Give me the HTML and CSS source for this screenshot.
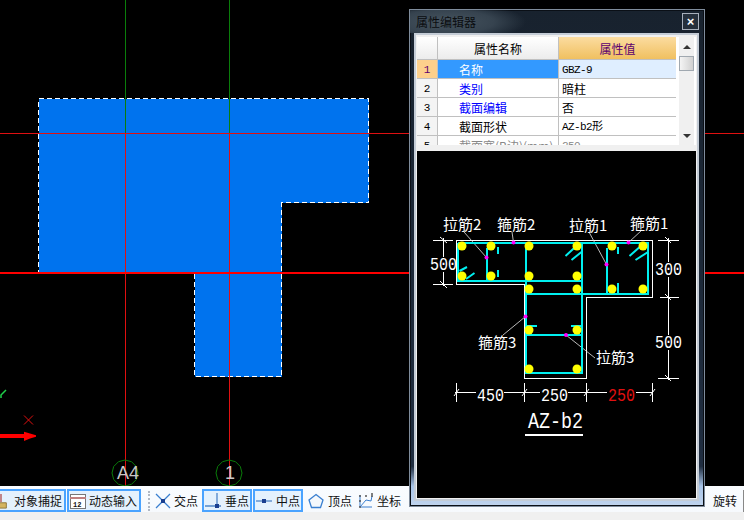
FILE: index.html
```html
<!DOCTYPE html>
<html lang="zh">
<head>
<meta charset="utf-8">
<title>属性编辑器</title>
<link rel="stylesheet" href="styles.css">
</head>
<body>
<div class="app">
  <svg class="cad" viewBox="0 0 744 486" shape-rendering="crispEdges">
    <polygon class="wall" points="38.5,98.5 368.5,98.5 368.5,202.5 281.5,202.5 281.5,376.5 194.5,376.5 194.5,272.5 38.5,272.5"/>
    <line class="axis-g" x1="125.5" y1="0" x2="125.5" y2="133"/>
    <line class="axis-g" x1="229.5" y1="0" x2="229.5" y2="133"/>
    <line class="axis-r" x1="125.5" y1="133" x2="125.5" y2="486"/>
    <line class="axis-r" x1="229.5" y1="133" x2="229.5" y2="486"/>
    <line class="axis-r" x1="0" y1="133.5" x2="744" y2="133.5"/>
    <line class="axis-main" x1="0" y1="272.5" x2="744" y2="272.5"/>
    <g shape-rendering="auto">
      <polygon class="bubble" points="125,460 131.5,461.7 136.3,466.5 138,473 136.3,479.5 131.5,484.3 125,486 118.5,484.3 113.7,479.5 112,473 113.7,466.5 118.5,461.7"/>
      <polygon class="bubble" points="229,460 235.5,461.7 240.3,466.5 242,473 240.3,479.5 235.5,484.3 229,486 222.5,484.3 217.7,479.5 216,473 217.7,466.5 222.5,461.7"/>
      <text class="bubble-t" x="117" y="479">A4</text>
      <text class="bubble-t" x="225" y="479">1</text>
      <path class="ucs-g" d="M6 390 L1 395 V398"/>
      <path class="ucs-x" d="M24 415.5 L33 424.5 M33 415.5 L24 424.5"/>
      <path class="ucs-a" d="M0 434 H24 V431.7 L30 433.5 L36 435.3 V436.7 L30 438.5 L24 441 V438 H0 Z"/>
    </g>
  </svg>

  <div class="toolbar">
    <div class="tool on first">
      <svg class="ico" viewBox="0 0 14 18"><path d="M4 11 H13 V17 H2 L0 14 Z" fill="#d4b460" stroke="#8a7030"/><path d="M7 1 V10" stroke="#b05050" stroke-width="1.5"/></svg>
      <span>对象捕捉</span>
    </div>
    <div class="tool on">
      <svg class="ico" viewBox="0 0 16 16"><rect x="0.5" y="1.5" width="15" height="14" fill="#fff" stroke="#777"/><rect x="0" y="4" width="16" height="2" fill="#c08080"/><text x="3" y="14" class="ico-t">12</text></svg>
      <span>动态输入</span>
    </div>
    <div class="grip"></div>
    <div class="tool">
      <svg class="ico" viewBox="0 0 16 16"><path d="M1 1 L15 15 M15 1 L1 15" stroke="#3a7fd0" stroke-width="1.3"/><rect x="6" y="6" width="4" height="4" fill="#1a3f90"/></svg>
      <span>交点</span>
    </div>
    <div class="tool on">
      <svg class="ico" viewBox="0 0 16 16"><path d="M0 13 H16 M12 0 V14" stroke="#4f86c8" stroke-width="1.3"/><rect x="10" y="11" width="4" height="4" fill="#1a3f90"/></svg>
      <span>垂点</span>
    </div>
    <div class="tool on">
      <svg class="ico" viewBox="0 0 16 16"><path d="M0 8 H16" stroke="#4f86c8" stroke-width="1.3"/><rect x="6" y="6" width="4" height="4" fill="#1a3f90"/></svg>
      <span>中点</span>
    </div>
    <div class="tool">
      <svg class="ico" viewBox="0 0 16 16"><path d="M8 1.5 L15 7 L12.5 14.5 H3.5 L1 7 Z" fill="#f4f8fc" stroke="#3a7fd0" stroke-width="1.3"/></svg>
      <span>顶点</span>
    </div>
    <div class="tool">
      <svg class="ico wide" viewBox="0 0 18 16"><path d="M3 2 V14 H15" stroke="#3a7fd0" fill="none"/><path d="M3 14 L9 7 L14 8 L15 3" stroke="#3a7fd0" fill="none"/><circle cx="3" cy="3" r="1" fill="#555"/><circle cx="3" cy="8" r="1" fill="#555"/><circle cx="3" cy="14" r="1" fill="#555"/><circle cx="15" cy="3" r="1" fill="#555"/><circle cx="15" cy="1" r="1" fill="#555"/><circle cx="9" cy="3" r="1" fill="#555"/></svg>
      <span>坐标</span>
    </div>
    <div class="tool rotate">
      <span>旋转</span>
      <div class="field"></div>
    </div>
  </div>

  <section class="panel">
    <header class="titlebar">
      <span class="title">属性编辑器</span>
      <button class="close" type="button">×</button>
    </header>
    <div class="panel-body">
      <div class="gridwrap">
        <div class="grid">
          <div class="c hd"></div><div class="c hd">属性名称</div><div class="c hd val">属性值</div>
          <div class="c no sel">1</div><div class="c name cur">名称</div><div class="c v curv mono">GBZ-9</div>
          <div class="c no">2</div><div class="c name link">类别</div><div class="c v">暗柱</div>
          <div class="c no">3</div><div class="c name link">截面编辑</div><div class="c v">否</div>
          <div class="c no">4</div><div class="c name">截面形状</div><div class="c v mono">AZ-b2形</div>
          <div class="c no">5</div><div class="c name dim">截面宽(B边)(mm)</div><div class="c v mono dim">250</div>
        </div>
        <div class="scroll">
          <div class="arrow up"></div>
          <div class="thumb"></div>
          <div class="arrow down"></div>
        </div>
      </div>
      <svg class="section" viewBox="417 151 279 347">
        <g shape-rendering="crispEdges">
          <path class="outline" d="M456.5 240.5 H652.5 V297.5 H586.5 V378.5 H524.5 V284.5 H456.5 Z"/>
          <path class="dim-l" d="M433 240.5 H453 M433 284.5 H453 M443.5 238 V257 M443.5 272 V286 M658 240.5 H679 M660 297.5 H679 M658 378.5 H679 M668.5 238 V262 M668.5 277 V335 M668.5 350 V380 M455 392.5 H476 M504 392.5 H540 M568 392.5 H607 M636 392.5 H653 M456.5 383 V402 M524.5 383 V402 M586.5 383 V402 M652.5 383 V402"/>
        </g>
        <path class="dim-l" d="M440 237 L447 243 M440 281 L447 288 M665 237 L671 243 M665 294 L671 300 M665 375 L671 381 M454 396 L459 389 M522 396 L527 389 M584 396 L589 389 M650 396 L655 389"/>
        <path class="leader" d="M486.5 257.5 L464 232 M513.5 242.5 L512 232 M606.5 264.5 L589 232 M628.5 242.5 L642 230 M525.5 316.5 L503 335 M566 335 L595 358"/>
        <g class="bars">
          <path d="M458 243 H648 V294 H526 M458 243 V281 H582 M526 243 V373 H582 V243 M526 335 H582 M487 248 V280 M607 248 V293"/>
          <path d="M498 247 V254 M498 270 V277 M618 247 V254 M618 283 V293 M526 326 H537 M571 326 H582"/>
          <path d="M565.5 256 L577.5 245 M571.5 260 L581.5 252 M629.5 256 L642 245 M635.5 260 L648 252 M459.5 271 L467 267 M466 279 L474.5 273"/>
        </g>
        <g class="dot">
          <circle cx="462" cy="246" r="4.5"/><circle cx="491" cy="246" r="4.5"/><circle cx="529" cy="246" r="4.5"/><circle cx="577" cy="246" r="4.5"/><circle cx="612" cy="246" r="4.5"/><circle cx="643" cy="246" r="4.5"/>
          <circle cx="462" cy="276" r="4.5"/><circle cx="491" cy="276" r="4.5"/><circle cx="529" cy="276" r="4.5"/><circle cx="577" cy="276" r="4.5"/>
          <circle cx="529" cy="289" r="4.5"/><circle cx="577" cy="289" r="4.5"/><circle cx="612" cy="289" r="4.5"/><circle cx="643" cy="289" r="4.5"/>
          <circle cx="529" cy="330" r="4.5"/><circle cx="577" cy="330" r="4.5"/><circle cx="529" cy="369" r="4.5"/><circle cx="577" cy="369" r="4.5"/>
        </g>
        <g class="pin">
          <circle cx="513.5" cy="242.5" r="2"/><circle cx="486.5" cy="257.5" r="2"/><circle cx="606.5" cy="264.5" r="2"/><circle cx="628.5" cy="242.5" r="2"/><circle cx="525.5" cy="316.5" r="2"/><circle cx="566" cy="335" r="2"/>
        </g>
        <text class="lbl" x="443" y="230">拉筋2</text>
        <text class="lbl" x="497" y="230">箍筋2</text>
        <text class="lbl" x="569" y="231">拉筋1</text>
        <text class="lbl" x="630" y="229">箍筋1</text>
        <text class="lbl" x="478" y="348">箍筋3</text>
        <text class="lbl" x="596" y="363">拉筋3</text>
        <text class="num" x="430" y="270" textLength="27" lengthAdjust="spacingAndGlyphs">500</text>
        <text class="num" x="655" y="275" textLength="27" lengthAdjust="spacingAndGlyphs">300</text>
        <text class="num" x="655" y="348" textLength="27" lengthAdjust="spacingAndGlyphs">500</text>
        <text class="num" x="477" y="401" textLength="27" lengthAdjust="spacingAndGlyphs">450</text>
        <text class="num" x="541" y="401" textLength="27" lengthAdjust="spacingAndGlyphs">250</text>
        <text class="num red" x="608" y="401" textLength="27" lengthAdjust="spacingAndGlyphs">250</text>
        <text class="fig" x="528" y="428" textLength="55" lengthAdjust="spacingAndGlyphs">AZ-b2</text>
        <rect class="fig-u" x="525" y="434" width="58" height="2"/>
      </svg>
    </div>
  </section>
</div>
</body>
</html>
```
FILE: styles.css
```css
* { box-sizing: border-box; }
html, body { margin: 0; padding: 0; }
body {
  width: 744px;
  height: 520px;
  overflow: hidden;
  background: #000;
  font-family: "Noto Sans CJK SC", "Liberation Sans", sans-serif;
  font-size: 12px;
}
.app {
  position: relative;
  width: 744px;
  height: 520px;
  display: flex;
  flex-direction: column;
  overflow: hidden;
}

/* CAD canvas */
.cad { display: block; width: 744px; height: 486px; flex: none; background: #000; }
.wall { fill: #0073ee; stroke: #fff; stroke-width: 1; stroke-dasharray: 5 3; }
.axis-g { stroke: #0a7d0a; stroke-width: 1; }
.axis-r { stroke: #e01010; stroke-width: 1; }
.axis-main { stroke: #ff0000; stroke-width: 2; }
.bubble { fill: none; stroke: #0a7d0a; stroke-width: 1; }
.bubble-t { fill: #c8c8c8; font: 18px "Liberation Sans", sans-serif; }
.ucs-g { fill: none; stroke: #1fd04a; stroke-width: 1.5; }
.ucs-x { fill: none; stroke: #e01010; stroke-width: 1; }
.ucs-a { fill: #ff0000; }

/* Bottom toolbar */
.toolbar {
  flex: 1;
  display: flex;
  align-items: flex-start;
  padding-top: 3px;
  background: linear-gradient(#f9fcff 0, #f6f9fd 26px, #f0f0f0 26px);
  color: #111;
  line-height: 17px;
}
.tool {
  display: flex;
  align-items: center;
  gap: 4px;
  height: 23px;
  padding: 0 2px 0 3px;
  flex: none;
  white-space: nowrap;
}
.tool.on {
  background: #e4f1fd;
  border: 2px solid #4aa3ff;
  padding: 0 1px;
  margin-right: 1px;
}
.tool.first { margin-left: -10px; width: 76px; gap: 5px; }
.tool:nth-child(2) { width: 74px; gap: 3px; }
.tool:nth-child(4) { margin-left: 2px; margin-right: 2px; gap: 3px; }
.tool:nth-child(5), .tool:nth-child(6) { width: 50px; gap: 4px; }
.tool:nth-child(7) { padding-left: 4px; gap: 4px; }
.tool:nth-child(8) { padding-left: 3px; gap: 2px; }
.ico { width: 16px; height: 16px; flex: none; }
.ico.wide { width: 18px; }
.ico-t { font: bold 7px "Liberation Mono", monospace; fill: #111; }
.grip {
  width: 2px;
  height: 20px;
  margin: 2px 0 0 6px;
  border-left: 2px dotted #b0b8c4;
  flex: none;
}
.rotate { margin-left: auto; margin-right: -9px; padding: 0; gap: 6px; }
.field { width: 10px; height: 22px; border: 1px solid #888; background: #fff; }

/* Floating property window */
.panel {
  position: absolute;
  left: 409px;
  top: 9px;
  width: 296px;
  height: 498px;
  border: 1px solid #7f8c9c;
  background: linear-gradient(#18222e 0, #1f2d40 92%, #a8c4e8 96%, #c0d4ee 100%);
  box-shadow: inset 0 0 0 1px #0a0f16;
  display: flex;
  flex-direction: column;
}
.titlebar {
  height: 23px;
  flex: none;
  display: flex;
  align-items: center;
  justify-content: space-between;
  padding: 0 5px 0 6px;
  background: radial-gradient(ellipse 80px 20px at 36px 12px, #46545f 0, #36434f 60%, rgba(40,50,60,0) 100%);
}
.title { color: #0b0d10; font-size: 12px; line-height: 16px; }
.close {
  width: 17px;
  height: 17px;
  padding: 0;
  border: 1px solid #a8b0bc;
  background: #26303c;
  color: #fff;
  font: bold 13px/14px "Liberation Sans", sans-serif;
  text-align: center;
}
.panel-body {
  flex: none;
  width: 285px;
  height: 468px;
  margin-left: 4px;
  border: 2px solid #c4ccd6;
  padding: 2px 1px 3px;
  background: #f0f0f0;
  display: flex;
  flex-direction: column;
  gap: 6px;
}
.gridwrap {
  display: flex;
  height: 108px;
  flex: none;
  background: #fff;
  overflow: hidden;
}
.grid {
  display: grid;
  grid-template-columns: 21px 121px 117px;
  grid-auto-rows: 19px;
  grid-template-rows: 23px;
  width: 259px;
  flex: none;
  line-height: 20px;
}
.c {
  border-right: 1px solid #c0c0c0;
  border-bottom: 1px solid #c0c0c0;
  overflow: hidden;
  white-space: nowrap;
  color: #000;
}
.hd {
  text-align: center;
  line-height: 23px;
  background: linear-gradient(#fff, #ececec);
}
.hd.val { background: linear-gradient(#fbdca0, #f0c060); color: #5c0070; border-right: 0; }
.no { text-align: center; background: #f4f4f4; font: 11px/20px "Liberation Mono", monospace; }
.no.sel { background: #fdd08c; color: #5c0070; }
.name { padding-left: 21px; }
.v { padding-left: 3px; border-right: 0; }
.mono { font-family: "Liberation Mono", "Noto Sans CJK SC", monospace; font-size: 11px; letter-spacing: -0.6px; }
.cur { background: #3399ff; color: #fff; }
.curv { background: #dfeeff; }
.link { color: #0000ff; }
.dim { color: #888; }
.scroll {
  position: relative;
  flex: none;
  width: 15px;
  margin-left: 3px;
  background: #f0f0f0;
  display: flex;
  flex-direction: column;
  align-items: center;
  padding: 8px 0 0;
}
.arrow { width: 0; height: 0; border-left: 4px solid transparent; border-right: 4px solid transparent; }
.arrow.up { border-bottom: 4px solid #333; }
.arrow.down { border-top: 4px solid #333; margin-top: 63px; }
.thumb {
  width: 15px;
  height: 15px;
  margin-top: 7px;
  border: 1px solid #a0a8b0;
  background: linear-gradient(90deg, #f4f4f4, #d0d0d0);
}

/* Section drawing */
.section { display: block; flex: none; width: 279px; height: 347px; background: #000; }
.outline { fill: none; stroke: #fff; stroke-width: 1; }
.dim-l { fill: none; stroke: #fff; stroke-width: 1; }
.leader { fill: none; stroke: #e8e8e8; stroke-width: 0.8; }
.bars path { fill: none; stroke: #00f0f0; stroke-width: 2; }
.dot circle { fill: #ffff00; }
.pin circle { fill: #ff00ff; }
.lbl { fill: #fff; font: 400 15px "Noto Sans CJK SC", sans-serif; }
.num { fill: #fff; font: 18px "Liberation Mono", monospace; }
.num.red { fill: #e01010; }
.fig { fill: #fff; font: 22px "Liberation Mono", monospace; }
.fig-u { fill: #fff; }
```
